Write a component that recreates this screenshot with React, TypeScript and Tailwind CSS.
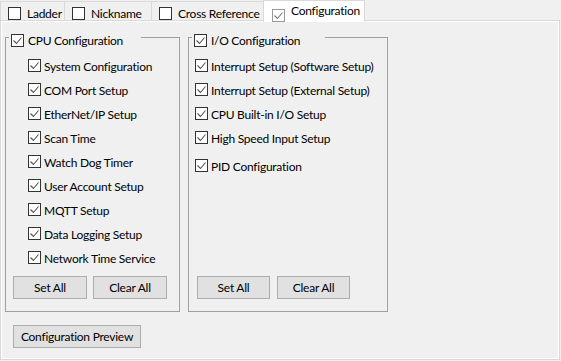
import React from "react";

function Box({ checked, light }: { checked?: boolean; light?: boolean }) {
  return (
    <span
      className={`w-[13px] h-[13px] shrink-0 border bg-white flex items-center justify-center ${
        light ? "border-[#999999]" : "border-[#333333]"
      }`}
    >
      {checked && (
        <svg width="11" height="11" viewBox="0 0 11 11">
          <path d="M1.5 5.5 L4.5 8.5 L9.5 2.5" stroke={light ? "#777777" : "#555555"} strokeWidth="1.1" fill="none" />
        </svg>
      )}
    </span>
  );
}

function Item({ label, className = "" }: { label: string; className?: string }) {
  return (
    <div className={`h-[24px] flex items-center gap-[3px] ${className}`}>
      <Box checked />
      <span className="pt-[3px] leading-none whitespace-nowrap">{label}</span>
    </div>
  );
}

function Btn({ label, w }: { label: string; w: string }) {
  return (
    <div
      className={`${w} h-[23px] bg-[#e1e1e1] border border-[#adadad] flex items-center justify-center leading-none whitespace-nowrap`}
    >
      {label}
    </div>
  );
}

function Tab({ label, w }: { label: string; w: string }) {
  return (
    <div
      className={`${w} h-[19px] -ml-px first:ml-0 border-t border-l border-r border-[#d9d9d9] bg-[#f0f0f0] flex items-start pl-[7px] pt-[5px] gap-[6px]`}
    >
      <Box />
      <span className="leading-none pt-[1px] whitespace-nowrap">{label}</span>
    </div>
  );
}

export default function App() {
  const cpu = [
    "System Configuration",
    "COM Port Setup",
    "EtherNet/IP Setup",
    "Scan Time",
    "Watch Dog Timer",
    "User Account Setup",
    "MQTT Setup",
    "Data Logging Setup",
    "Network Time Service",
  ];
  const io = [
    "Interrupt Setup (Software Setup)",
    "Interrupt Setup (External Setup)",
    "CPU Built-in I/O Setup",
    "High Speed Input Setup",
  ];
  return (
    <div className="w-[561px] h-[361px] bg-[#f0f0f0] text-black text-[12px] tracking-[-0.25px] font-['Segoe_UI','Lato',sans-serif] overflow-hidden">
      <div className="h-[20px] flex items-end">
        <Tab label="Ladder" w="w-[65px]" />
        <Tab label="Nickname" w="w-[88px]" />
        <Tab label="Cross Reference" w="w-[113px]" />
        <div className="relative z-10 -ml-px -mb-[2px] w-[102px] h-[22px] bg-white border-t border-l border-r border-[#d9d9d9] flex items-start pl-[8px] gap-[6px]">
          <span className="mt-[8px]">
            <Box checked light />
          </span>
          <span className="leading-none mt-[4px] whitespace-nowrap">Configuration</span>
        </div>
      </div>
      <div className="w-[560px] h-[340px] border border-[#d9d9d9]">
        <div className="w-full h-full border border-white flex flex-col">
          <div className="flex gap-[8px] mt-[15px] ml-[3px]">
            {/* CPU group */}
            <div className="relative w-[175px] h-[275px] border border-[#a0a0a0] flex flex-col">
              <div className="absolute left-[3px] -top-[4px] w-[132px] h-[14px] bg-[#f0f0f0] flex items-start pl-[2px] gap-[4px]">
                <Box checked />
                <span className="leading-none pt-[1px] whitespace-nowrap">CPU Configuration</span>
              </div>
              <div className="pt-[15px] pl-[22px] flex flex-col">
                {cpu.map((c) => (
                  <Item key={c} label={c} />
                ))}
              </div>
              <div className="mt-auto mb-[12px] ml-[7px] flex gap-[6px]">
                <Btn label="Set All" w="w-[74px]" />
                <Btn label="Clear All" w="w-[74px]" />
              </div>
            </div>
            {/* IO group */}
            <div className="relative w-[200px] h-[275px] border border-[#a0a0a0] flex flex-col">
              <div className="absolute left-[3px] -top-[4px] w-[133px] h-[14px] bg-[#f0f0f0] flex items-start pl-[2px] gap-[4px]">
                <Box checked />
                <span className="leading-none pt-[1px] whitespace-nowrap">I/O Configuration</span>
              </div>
              <div className="pt-[15px] pl-[6px] flex flex-col">
                {io.map((c) => (
                  <Item key={c} label={c} />
                ))}
                <Item label="PID Configuration" className="mt-[4px]" />
              </div>
              <div className="mt-auto mb-[12px] ml-[8px] flex gap-[7px]">
                <Btn label="Set All" w="w-[73px]" />
                <Btn label="Clear All" w="w-[73px]" />
              </div>
            </div>
          </div>
          <div className="mt-[13px] ml-[11px]">
            <Btn label="Configuration Preview" w="w-[128px]" />
          </div>
        </div>
      </div>
    </div>
  );
}
